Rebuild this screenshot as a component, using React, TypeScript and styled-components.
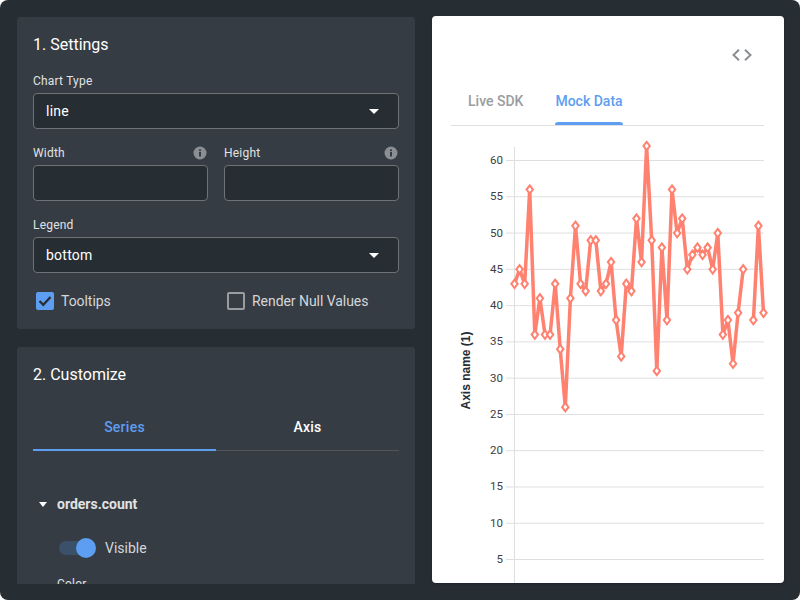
import styled, { createGlobalStyle } from "styled-components";

const GlobalStyle = createGlobalStyle`
  html, body {
    margin: 0;
    padding: 0;
    background: #ffffff;
  }
  * {
    box-sizing: border-box;
  }
`;

const Page = styled.div`
  width: 800px;
  height: 600px;
  padding: 16px 16px 16px 17px;
  background: #262d33;
  border-radius: 8px;
  display: grid;
  grid-template-columns: 398px 352px;
  column-gap: 17px;
  overflow: hidden;
  font-family: Roboto, "Liberation Sans", sans-serif;
  color: #e4e6e8;
`;

const LeftColumn = styled.div`
  height: 568px;
  padding-top: 1px;
  display: flex;
  flex-direction: column;
  gap: 18px;
  overflow: hidden;
`;

const Panel = styled.section`
  flex: none;
  padding: 16px 16px 16px;
  background: #363c43;
  border-radius: 3px;
`;

const PanelTitle = styled.h2`
  margin: 0;
  font-size: 16px;
  line-height: 24px;
  font-weight: 400;
  color: #ffffff;
`;

const FieldGrid = styled.div`
  display: grid;
  grid-template-columns: 175px 175px;
  column-gap: 16px;
  margin-top: 16px;
`;

const Field = styled.div<{ $mt?: number }>`
  margin-top: ${(props) => props.$mt ?? 0}px;
`;

const LabelRow = styled.div`
  display: flex;
  justify-content: space-between;
  align-items: center;
  height: 16px;
  margin-bottom: 4px;
  padding-right: 1px;
`;

const Label = styled.label`
  font-size: 12px;
  line-height: 16px;
  letter-spacing: 0.2px;
  color: #e0e2e4;
`;

const InputBox = styled.div`
  height: 36px;
  padding: 0 19px 0 12px;
  display: flex;
  align-items: center;
  justify-content: space-between;
  background: #262d33;
  border: 1px solid #6e7276;
  border-radius: 4px;
  font-size: 14px;
  letter-spacing: 0.25px;
  color: #ffffff;
`;

const CheckRow = styled.div`
  display: grid;
  grid-template-columns: 175px 175px;
  column-gap: 16px;
  margin-top: 16px;
`;

const CheckItem = styled.div`
  display: flex;
  align-items: center;
  gap: 7px;
  padding-left: 3px;
  height: 24px;
  font-size: 14px;
  letter-spacing: -0.05px;
  color: #d4d6d9;
`;

const CheckBox = styled.span<{ $checked?: boolean }>`
  width: 18px;
  height: 18px;
  display: flex;
  align-items: center;
  justify-content: center;
  border-radius: 2px;
  background: ${(props) => (props.$checked ? "#5e9ef2" : "transparent")};
  border: ${(props) => (props.$checked ? "none" : "2px solid #9a9da0")};
`;

const TabRow = styled.div`
  display: grid;
  grid-template-columns: 1fr 1fr;
  margin-top: 15px;
  border-bottom: 1px solid #50555a;
`;

const SideTab = styled.div<{ $active?: boolean }>`
  height: 49px;
  padding-top: 2px;
  display: flex;
  align-items: center;
  justify-content: center;
  margin-bottom: -1px;
  font-size: 14px;
  font-weight: 500;
  letter-spacing: 0.25px;
  color: ${(props) => (props.$active ? "#5e9ef2" : "#ffffff")};
  border-bottom: 2px solid ${(props) => (props.$active ? "#5e9ef2" : "transparent")};
`;

const SeriesHeader = styled.div`
  display: flex;
  align-items: center;
  gap: 10px;
  height: 20px;
  margin-top: 43px;
  padding-left: 6px;
  font-size: 14px;
  font-weight: 700;
  color: #e0e2e4;
`;

const ToggleRow = styled.div`
  display: flex;
  align-items: center;
  gap: 12px;
  height: 24px;
  margin-top: 22px;
  padding-left: 26px;
  font-size: 14px;
  color: #d4d6d9;
`;

const ToggleTrack = styled.span`
  position: relative;
  width: 34px;
  height: 14px;
  border-radius: 7px;
  background: #3b5069;
`;

const ToggleKnob = styled.span`
  position: absolute;
  top: -3px;
  right: -3px;
  width: 20px;
  height: 20px;
  border-radius: 50%;
  background: #5e9ef2;
`;

const ColorLabel = styled.div`
  margin: 16px 0 0 24px;
  font-size: 12px;
  line-height: 16px;
  letter-spacing: 0.2px;
  color: #e0e2e4;
`;

const PreviewCard = styled.section`
  height: 567px;
  padding: 0 20px 0 19px;
  background: #ffffff;
  border-radius: 4px;
  box-shadow: 0 1px 2px rgba(0, 0, 0, 0.2);
  overflow: hidden;
`;

const CodeRow = styled.div`
  display: flex;
  justify-content: flex-end;
  height: 77px;
  padding: 33px 12px 0 0;
`;

const PreviewTabs = styled.div`
  display: flex;
  gap: 32px;
  height: 33px;
  padding-left: 17px;
  border-bottom: 1px solid #dedfe0;
`;

const PreviewTab = styled.div<{ $active?: boolean }>`
  position: relative;
  height: 32px;
  font-size: 14px;
  line-height: 16px;
  font-weight: 500;
  color: ${(props) => (props.$active ? "#5e9ef2" : "#9a9da0")};

  &::after {
    content: "";
    display: ${(props) => (props.$active ? "block" : "none")};
    position: absolute;
    left: 0;
    right: 0;
    bottom: 0;
    height: 3px;
    border-radius: 3px 3px 0 0;
    background: #5e9ef2;
  }
`;

const ChartSvg = styled.svg`
  display: block;
  width: 313px;
  height: 458px;
  overflow: visible;
`;

const TickText = styled.text`
  font-size: 11.5px;
  fill: #3c4043;
  text-anchor: end;
`;

const AxisTitle = styled.text`
  font-family: "Liberation Sans", Arial, sans-serif;
  font-size: 12px;
  font-weight: 700;
  fill: #262d33;
  text-anchor: middle;
`;

const values: (number | null)[] = [
  43, 45, 43, 56, 36, 41, 36, 36, 43, 34, 26, 41, 51, 43, 42, 49, 49, 42, 43, 46,
  38, 33, 43, 42, 52, 46, 62, 49, 31, 48, 38, 56, 50, 52, 45, 47, 48, 47, 48, 45,
  50, 36, 38, 32, 39, 45, null, 38, 51, 39,
];

const ticks = [60, 55, 50, 45, 40, 35, 30, 25, 20, 15, 10, 5];

const xOf = (i: number) => 514.5 + i * 5.082;
const yOf = (v: number) => 160.5 + (60 - v) * 7.255;

// split the series where a value is missing, the line breaks there
function segments() {
  const out: string[] = [];
  let current: string[] = [];
  values.forEach((v, i) => {
    if (v === null) {
      out.push(current.join(" "));
      current = [];
    } else {
      current.push(`${xOf(i).toFixed(1)},${yOf(v).toFixed(1)}`);
    }
  });
  out.push(current.join(" "));
  return out;
}

function Caret() {
  return (
    <svg width="10" height="5" viewBox="0 0 10 5">
      <path d="M0 0h10L5 5z" fill="#ffffff" />
    </svg>
  );
}

function InfoIcon() {
  return (
    <svg width="14" height="14" viewBox="0 0 14 14">
      <circle cx="7" cy="7" r="6.5" fill="#8b8f93" />
      <rect x="6" y="6" width="2" height="4.5" fill="#363c43" />
      <rect x="6" y="3.4" width="2" height="1.7" fill="#363c43" />
    </svg>
  );
}

function Chart() {
  return (
    <ChartSvg viewBox="451 126 313 458">
      {ticks.map((t) => (
        <g key={t}>
          <line x1="506" x2="764" y1={yOf(t)} y2={yOf(t)} stroke="#dedfe0" strokeWidth="1" />
          <TickText x="503" y={yOf(t) + 3.5}>
            {t}
          </TickText>
        </g>
      ))}
      <line x1="514.5" x2="514.5" y1="147" y2="584" stroke="#dedfe0" strokeWidth="1" />
      <AxisTitle transform="translate(470 370.5) rotate(-90)">Axis name (1)</AxisTitle>
      {segments().map((points) => (
        <polyline
          key={points}
          points={points}
          fill="none"
          stroke="#ff8170"
          strokeWidth="3.5"
          strokeLinejoin="miter"
        />
      ))}
      {values.map((v, i) =>
        v === null ? null : (
          <path
            key={i}
            d={`M${xOf(i)} ${yOf(v) - 4.2}l3.2 4.2l-3.2 4.2l-3.2 -4.2z`}
            fill="#ffffff"
            stroke="#ff8170"
            strokeWidth="2"
          />
        )
      )}
    </ChartSvg>
  );
}

export default function App() {
  return (
    <>
      <GlobalStyle />
      <Page>
        <LeftColumn>
          <Panel>
            <PanelTitle>1. Settings</PanelTitle>
            <Field $mt={16}>
              <LabelRow>
                <Label>Chart Type</Label>
              </LabelRow>
              <InputBox>
                line
                <Caret />
              </InputBox>
            </Field>
            <FieldGrid>
              <Field>
                <LabelRow>
                  <Label>Width</Label>
                  <InfoIcon />
                </LabelRow>
                <InputBox />
              </Field>
              <Field>
                <LabelRow>
                  <Label>Height</Label>
                  <InfoIcon />
                </LabelRow>
                <InputBox />
              </Field>
            </FieldGrid>
            <Field $mt={16}>
              <LabelRow>
                <Label>Legend</Label>
              </LabelRow>
              <InputBox>
                bottom
                <Caret />
              </InputBox>
            </Field>
            <CheckRow>
              <CheckItem>
                <CheckBox $checked>
                  <svg width="14" height="12" viewBox="0 0 14 12">
                    <path d="M1.5 6l3.8 3.8L12.5 2" fill="none" stroke="#262d33" strokeWidth="2.2" />
                  </svg>
                </CheckBox>
                Tooltips
              </CheckItem>
              <CheckItem>
                <CheckBox />
                Render Null Values
              </CheckItem>
            </CheckRow>
          </Panel>
          <Panel>
            <PanelTitle>2. Customize</PanelTitle>
            <TabRow>
              <SideTab $active>Series</SideTab>
              <SideTab>Axis</SideTab>
            </TabRow>
            <SeriesHeader>
              <svg width="8" height="5" viewBox="0 0 8 5">
                <path d="M0 0h8L4 5z" fill="#ffffff" />
              </svg>
              orders.count
            </SeriesHeader>
            <ToggleRow>
              <ToggleTrack>
                <ToggleKnob />
              </ToggleTrack>
              Visible
            </ToggleRow>
            <ColorLabel>Color</ColorLabel>
          </Panel>
        </LeftColumn>
        <PreviewCard>
          <CodeRow>
            <svg width="20" height="12" viewBox="0 0 20 12">
              <path
                d="M7 .7L1.5 6 7 11.3M13 .7L18.5 6 13 11.3"
                fill="none"
                stroke="#8b8f93"
                strokeWidth="2"
              />
            </svg>
          </CodeRow>
          <PreviewTabs>
            <PreviewTab>Live SDK</PreviewTab>
            <PreviewTab $active>Mock Data</PreviewTab>
          </PreviewTabs>
          <Chart />
        </PreviewCard>
      </Page>
    </>
  );
}
